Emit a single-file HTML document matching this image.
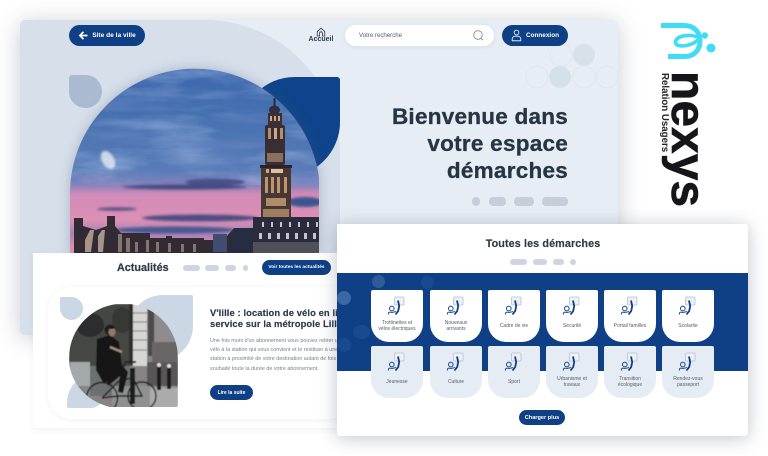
<!DOCTYPE html>
<html lang="fr"><head><meta charset="utf-8"><title>nexys</title>
<style>
*{box-sizing:border-box;margin:0;padding:0}
html,body{width:768px;height:456px;overflow:hidden;background:#fff}
body{font-family:"Liberation Sans",sans-serif;position:relative}
#r{position:absolute;left:0;top:0;width:768px;height:456px;filter:blur(.35px);overflow:hidden}
.a{position:absolute}
.t{position:absolute;white-space:nowrap}
.btn{position:absolute;background:#0f3f85;border-radius:12px;color:#fff;display:flex;align-items:center;justify-content:center;font-weight:bold;white-space:nowrap}
.p{position:absolute;background:#ccd5e1;border-radius:4px}
.tile{position:absolute;width:52px;height:52px;border-radius:2px 2px 18px 18px;background:#fff}
.tile.g{background:#e6ecf4}
.tile svg{position:absolute;left:16px;top:6px}
.tile span{position:absolute;left:0;right:0;top:29px;height:14px;display:flex;align-items:center;justify-content:center;text-align:center;font-size:5px;line-height:6px;color:#555c68}
</style></head><body><div id="r">

<!-- window -->
<div class="a" style="left:20px;top:20px;width:598px;height:315px;background:#e7edf5;border-radius:5px;box-shadow:0 3px 24px rgba(60,70,90,.28);overflow:hidden">
  <div class="a" style="left:0;top:0;width:320px;height:315px;background:#d6dfea;border-radius:0 135px 0 0"></div>
  <svg class="a" style="left:500px;top:20px" width="98" height="50">
    <g fill="none" stroke="#dfe6ee" stroke-width="1"><circle cx="41" cy="15" r="11"/><circle cx="17" cy="37" r="11"/><circle cx="64" cy="37" r="11"/><circle cx="87" cy="37" r="11"/></g>
    <circle cx="64" cy="15" r="11" fill="#d8e1e9"/><circle cx="40" cy="37" r="11" fill="#d6e0ea"/>
  </svg>
</div>

<!-- dark shape -->
<div class="a" style="left:240px;top:77px;width:100px;height:100px;background:#0f448c;border-radius:55px 3px 55px 0"></div>
<!-- small blob -->
<div class="a" style="left:69px;top:75px;width:33px;height:33px;background:#a9bad1;border-radius:3px 17px 17px 17px"></div>

<!-- photo -->
<svg class="a" style="left:60px;top:60px;filter:drop-shadow(0 0 6px rgba(70,85,110,.3))" width="270" height="200" viewBox="60 60 270 200">
<defs>
<clipPath id="c"><path d="M70 192A125 125 0 0 1 319 178V254H70Z"/></clipPath>
<linearGradient id="sky" x1="0" y1="0" x2="0" y2="1"><stop offset="0" stop-color="#3a66ac"/><stop offset=".35" stop-color="#4a74b2"/><stop offset=".55" stop-color="#587cb8"/><stop offset=".62" stop-color="#7f80ba"/><stop offset=".67" stop-color="#d08bb8"/><stop offset=".8" stop-color="#dc90b4"/><stop offset=".87" stop-color="#a682b8"/><stop offset=".93" stop-color="#dd8fa8"/><stop offset="1" stop-color="#dd8fa8"/></linearGradient>
<filter id="b1" x="-30%" y="-100%" width="160%" height="300%"><feGaussianBlur stdDeviation="1.300"/></filter>
<filter id="n1" x="0" y="0" width="1" height="1"><feTurbulence type="fractalNoise" baseFrequency=".014 .06" numOctaves="4" seed="4"/><feColorMatrix values="0 0 0 0 .55 0 0 0 0 .68 0 0 0 0 .92 2.200 0 0 0 -1"/></filter>
<filter id="n2" x="0" y="0" width="1" height="1"><feTurbulence type="fractalNoise" baseFrequency=".012 .08" numOctaves="3" seed="11"/><feColorMatrix values="0 0 0 0 .18 0 0 0 0 .28 0 0 0 0 .58 2.400 0 0 0 -1.050"/></filter>
</defs>
<g clip-path="url(#c)">
<rect x="60" y="60" width="270" height="200" fill="url(#sky)"/>
<rect x="60" y="60" width="270" height="125" filter="url(#n1)" opacity=".4"/>
<rect x="60" y="60" width="270" height="125" filter="url(#n2)" opacity=".4"/>
<g filter="url(#b1)">
<ellipse cx="108" cy="160" rx="6" ry="10" fill="#e9ecf4" opacity=".8" transform="rotate(-30 108 160)"/>
<ellipse cx="185" cy="187" rx="62" ry="2.500" fill="#47497f"/>
<ellipse cx="215" cy="182" rx="30" ry="3.500" fill="#465189"/>
<ellipse cx="117" cy="209" rx="20" ry="1.800" fill="#5c4f86"/>
<ellipse cx="200" cy="218" rx="58" ry="3.500" fill="#4d4e84"/>
<ellipse cx="305" cy="202" rx="18" ry="5" fill="#3d558f"/>
<ellipse cx="175" cy="230" rx="60" ry="3.500" fill="#4b5690"/>
</g>
<!-- houses -->
<path d="M74 254V218H83V226L96 230 107 226V216H115V226L121 233H150V238H166V236H172V238H204V240H213V234H227V236L234 228H253V254Z" fill="#322b33"/>
<path d="M85 240l5-10h4l-3 22h-6zM98 236l4-6h3l-2 22h-5z" fill="#a89488"/>
<path d="M118 252V234h4v18zM126 252v-14h4v14zM135 252v-10h3v10zM146 252v-12h3v12zM156 252v-10h3v10zM168 252v-9h3v9zM181 252v-8h3v8zM193 252v-8h3v8z" fill="#84766e"/>
<path d="M213 252V234H227V252Z" fill="#3f4d72"/>
<path d="M228 252 234 228H253V252Z" fill="#262d42"/>
<!-- tower -->
<rect x="273.500" y="98" width="2" height="10" fill="#2a2a38"/>
<ellipse cx="274.500" cy="110" rx="5.500" ry="4.500" fill="#2e2e3e"/>
<rect x="268" y="113" width="14" height="13" fill="#3d3034"/>
<rect x="265" y="125" width="20" height="40" rx="2" fill="#382e34"/>
<rect x="261" y="165" width="30" height="54" fill="#473833"/>
<rect x="260" y="165" width="32" height="3" fill="#2a2328"/>
<g fill="#d2a77c"><rect x="270" y="116" width="2" height="5"/><rect x="274" y="116" width="2" height="5"/><rect x="278" y="116" width="2" height="5"/><rect x="268" y="128" width="3" height="11" opacity=".8"/><rect x="274" y="128" width="3" height="11"/><rect x="280" y="128" width="3" height="11" opacity=".8"/><rect x="267" y="153" width="16" height="9" opacity=".55"/><rect x="266" y="169" width="3" height="4"/><rect x="271" y="169" width="12" height="4" fill="#e0c09a"/><rect x="265" y="177" width="3" height="16" opacity=".85"/><rect x="271" y="177" width="3" height="16" opacity=".85"/><rect x="277" y="177" width="3" height="16" opacity=".85"/><rect x="284" y="177" width="3" height="16" opacity=".85"/><rect x="266" y="198" width="20" height="8" fill="#b08c68"/><rect x="263" y="209" width="26" height="8" fill="#a07f60"/></g>
<!-- palace -->
<path d="M253 254V217H320V254Z" fill="#2a2b3c"/>
<path d="M253 242H320V254H253Z" fill="#50505a"/>
<g fill="#c4c5cc"><rect x="259" y="233" width="3" height="6"/><rect x="268" y="233" width="3" height="6"/><rect x="277" y="233" width="3" height="6"/><rect x="286" y="233" width="3" height="6"/><rect x="295" y="233" width="3" height="6"/><rect x="304" y="233" width="3" height="6"/><rect x="313" y="233" width="3" height="6"/><rect x="262" y="222" width="2" height="5"/><rect x="271" y="222" width="2" height="5"/><rect x="280" y="222" width="2" height="5"/><rect x="289" y="222" width="2" height="5"/><rect x="298" y="222" width="2" height="5"/><rect x="307" y="222" width="2" height="5"/><rect x="316" y="222" width="2" height="5"/></g>
</g></svg>

<!-- top bar -->
<div class="btn" style="left:69px;top:25px;width:76px;height:21px;font-size:6.600px;padding-left:14px">Site de la ville</div>
<svg class="a" style="left:78px;top:30px" width="11" height="11" viewBox="0 0 11 11"><path d="M9.500 5.500H2M5.500 1.800 1.800 5.500 5.500 9.200" fill="none" stroke="#fff" stroke-width="1.700"/></svg>
<svg class="a" style="left:316px;top:27px" width="10" height="10" viewBox="0 0 10 10"><path d="M1.200 9V4.600L5 1.200 8.800 4.600V9H6.400V6.200A1.400 1.400 0 0 0 3.600 6.200V9Z" fill="none" stroke="#2c3a4c" stroke-width=".8"/></svg>
<div class="t" style="left:301px;width:40px;top:36px;text-align:center;font-size:7px;line-height:8px;color:#29394a;font-weight:bold">Accueil</div>
<div class="a" style="left:345px;top:25px;width:149px;height:21px;background:#fff;border-radius:11px;box-shadow:0 1px 5px rgba(90,105,130,.12)"></div>
<div class="t" style="left:359px;top:32px;font-size:6.100px;line-height:8px;color:#556070">Votre recherche</div>
<svg class="a" style="left:472px;top:29px" width="13" height="13" viewBox="0 0 13 13"><circle cx="6" cy="6" r="4.300" fill="none" stroke="#7d8793" stroke-width=".8"/><path d="M9 9.200 11 11.200" stroke="#7d8793" stroke-width="1"/></svg>
<div class="btn" style="left:502px;top:25px;width:66px;height:21px;font-size:6.400px;padding-left:15px">Connexion</div>
<svg class="a" style="left:511px;top:29px" width="11" height="13" viewBox="0 0 11 13"><circle cx="5.500" cy="3.500" r="2.400" fill="none" stroke="#fff" stroke-width=".8"/><path d="M1.200 11.800V10A3 3 0 0 1 4.200 7.200H6.800A3 3 0 0 1 9.800 10V11.800Z" fill="none" stroke="#fff" stroke-width=".8"/></svg>

<!-- title -->
<div class="t" style="right:200px;top:103px;text-align:right;font-size:22.500px;line-height:27px;font-weight:bold;color:#263543;letter-spacing:.25px;-webkit-text-stroke:.3px #263543">Bienvenue dans<br>votre espace<br>démarches</div>
<div class="p" style="left:472px;top:197px;width:8px;height:9px;background:#c5ced9"></div>
<div class="p" style="left:489px;top:197px;width:17px;height:9px;background:#c5ced9"></div>
<div class="p" style="left:514px;top:197px;width:20px;height:9px;background:#c5ced9"></div>
<div class="p" style="left:542px;top:197px;width:26px;height:9px;background:#c5ced9"></div>

<!-- logo -->
<svg class="a" style="left:655px;top:18px" width="66" height="48" viewBox="655 18 66 48">
<path d="M661 25.500H684C694 25.500 700 32 700 41 700 51 693 56.500 685 56.500H668" fill="none" stroke="#3fdcf5" stroke-width="5"/>
<path d="M699 38C692 33.500 676 35 675.500 42 675 48 690 47 698 40" fill="none" stroke="#3fdcf5" stroke-width="3.600"/>
<circle cx="704.800" cy="35.500" r="3.200" fill="#3fdcf5"/><circle cx="711" cy="48" r="4.500" fill="#3fdcf5"/>
</svg>
<div class="t" style="left:711px;top:71px;transform-origin:0 0;transform:rotate(90deg);font-size:48px;line-height:48px;font-weight:bold;color:#15151a;-webkit-text-stroke:.6px #15151a">nexys</div>
<div class="t" style="left:668.500px;top:73px;transform-origin:0 0;transform:rotate(90deg);font-size:9.700px;line-height:10px;font-weight:bold;color:#26262c">Relation Usagers</div>

<!-- news card -->
<div class="a" style="left:33px;top:253px;width:320px;height:175px;background:#fff;box-shadow:0 2px 6px rgba(90,100,120,.08)"></div>
<div class="t" style="left:117px;top:261px;font-size:10.800px;line-height:14px;font-weight:bold;color:#2c3a48;-webkit-text-stroke:.2px #2c3a48">Actualités</div>
<div class="p" style="left:183px;top:265px;width:17px;height:6px"></div>
<div class="p" style="left:205px;top:265px;width:14px;height:6px"></div>
<div class="p" style="left:225px;top:265px;width:11px;height:6px"></div>
<div class="p" style="left:243px;top:265px;width:5px;height:6px"></div>
<div class="btn" style="left:262px;top:260px;width:69px;height:15px;font-size:4.800px">Voir toutes les actualités</div>

<div class="a" style="left:48px;top:287px;width:305px;height:132px;background:#fff;border-radius:24px;box-shadow:0 1px 7px rgba(100,115,140,.09)"></div>
<div class="a" style="left:60px;top:297px;width:23px;height:23px;background:#cbd7e4;border-radius:2px 12px 12px 12px"></div>
<div class="a" style="left:128px;top:295px;width:65px;height:66px;background:#cbd7e4;border-radius:35px 2px 35px 0"></div>
<div class="a" style="left:67px;top:373px;width:36px;height:35px;background:#cbd7e4;border-radius:30px 0 12px 2px"></div>
<svg class="a" style="left:69px;top:304px" width="109" height="104" viewBox="69 304 109 104">
<defs><clipPath id="d"><path d="M69 358A54.500 54.500 0 0 1 178 358V405Q178 407 176 407H110A54.500 50 0 0 1 69 358Z"/></clipPath>
<filter id="b3"><feGaussianBlur stdDeviation=".6"/></filter></defs>
<g clip-path="url(#d)"><g filter="url(#b3)">
<rect x="69" y="304" width="109" height="104" fill="#868484"/>
<rect x="69" y="304" width="64" height="62" fill="#454745"/>
<ellipse cx="90" cy="325" rx="14" ry="12" fill="#2c2e2d"/><ellipse cx="122" cy="320" rx="10" ry="13" fill="#353736"/>
<rect x="70" y="362" width="20" height="24" fill="#a4a9a9"/>
<rect x="90" y="366" width="40" height="30" fill="#6d6f6f"/>
<rect x="133" y="304" width="14" height="62" fill="#d6d6d4"/>
<path d="M133 313h14M133 322h14M133 331h14M133 340h14M133 350h14" stroke="#929292" stroke-width="1.300"/>
<rect x="129" y="304" width="4" height="60" fill="#2e2e2e"/>
<rect x="148" y="310" width="6" height="46" fill="#4b4b4b"/>
<rect x="155" y="312" width="23" height="50" fill="#8e8c8c"/>
<rect x="152" y="342" width="26" height="36" fill="#6a6667"/>
<rect x="147" y="362" width="31" height="26" fill="#5a5758"/>
<rect x="112" y="386" width="66" height="22" fill="#8f9090"/>
<rect x="150" y="388" width="28" height="20" fill="#ababab"/>
<rect x="157" y="365" width="4" height="25" fill="#1c1c1c"/><rect x="167" y="366" width="4" height="23" fill="#1c1c1c"/>
<circle cx="159" cy="365" r="2" fill="#ddd"/><circle cx="169" cy="366" r="2" fill="#ddd"/>
<path d="M97 339 110 335 119 342 122 366 104 384 96 370Z" fill="#171717"/>
<circle cx="110" cy="330" r="5.500" fill="#2a2523"/><ellipse cx="112" cy="332" rx="3.500" ry="4.500" fill="#93796c"/>
<path d="M105 330a6 5 0 0 1 10-3l-2 2-5 0-1 3z" fill="#1c1a19"/>
<path d="M104 372 122 365 128 372 123 393 118 392 120 376 108 386Z" fill="#141414"/>
<path d="M110 347 122 352" stroke="#a28a7c" stroke-width="2.500"/>
<path d="M136 362h-10l-3 6" stroke="#2a2a2a" stroke-width="2" fill="none"/>
<g fill="none" stroke="#1d1d1d" stroke-width="1.400"><circle cx="102" cy="398" r="15.500"/><circle cx="142" cy="396" r="14"/><path d="M102 398 120 380 133 378 142 396 118 396 102 398"/></g>
<rect x="130" y="368" width="5" height="36" fill="#1d1d1d"/>
</g></g></svg>
<div class="a" style="left:210px;top:307px;width:127px;height:24px;overflow:hidden">
<div style="font-size:9.400px;line-height:11px;font-weight:bold;color:#2c3946;white-space:nowrap;letter-spacing:.1px;-webkit-text-stroke:.15px #2c3946">V'lille : location de vélo en libre<br>service sur la métropole Lille</div></div>
<div class="a" style="left:210px;top:337px;width:127px;height:36px;overflow:hidden">
<div style="font-size:5.400px;line-height:9.200px;color:#7a818a;white-space:nowrap">Une fois muni d'un abonnement vous pouvez retirer un<br>vélo à la station qui vous convient et le restituer à une<br>station à proximité de votre destination autant de fois<br>souhaité toute la durée de votre abonnement.</div></div>
<div class="btn" style="left:210px;top:385px;width:43px;height:15px;font-size:5px">Lire la suite</div>

<!-- demarches card -->
<div class="a" style="left:337px;top:224px;width:411px;height:212px;background:#fff;border-radius:0 3px 4px 3px;box-shadow:0 2px 18px rgba(50,60,80,.3);overflow:hidden">
  <div class="a" style="left:0;top:49px;width:411px;height:98px;background:#0f3f85;overflow:hidden">
    <div class="a" style="left:0;top:18px;width:14px;height:14px;border-radius:50%;background:#3a68a5"></div>
    <div class="a" style="left:35px;top:2px;width:13px;height:13px;border-radius:50%;background:#2f5c98"></div>
    <div class="a" style="left:16px;top:52px;width:17px;height:14px;border-radius:50%;background:#174a8e"></div>
    <div class="a" style="left:0;top:65px;width:14px;height:14px;border-radius:50%;background:#174a8e"></div>
    <div class="a" style="left:84px;top:3px;width:13px;height:13px;border-radius:50%;background:#174a8e"></div>
  </div>
</div>
<div class="t" style="left:443px;width:200px;top:237px;text-align:center;font-size:10.800px;line-height:14px;font-weight:bold;color:#2f3a47;letter-spacing:.1px;-webkit-text-stroke:.15px #2f3a47">Toutes les démarches</div>
<div class="p" style="left:510px;top:259px;width:17px;height:6px"></div>
<div class="p" style="left:533px;top:259px;width:14px;height:6px"></div>
<div class="p" style="left:553px;top:259px;width:11px;height:6px"></div>
<div class="p" style="left:570px;top:259px;width:6px;height:6px"></div>

<svg width="0" height="0" style="position:absolute"><defs><symbol id="i" viewBox="0 0 18 20">
<rect x="7.500" y="1" width="9.500" height="8" rx="1" fill="#edf1f6" stroke="#b3c1d5" stroke-width=".8"/>
<path d="M11 4.500 12.200 10 11.200 15 8.500 18.500" fill="none" stroke="#133f85" stroke-width="1.800"/>
<circle cx="4.800" cy="12.500" r="2.300" fill="none" stroke="#2b5797" stroke-width="1.100"/>
<path d="M1.500 18.500C1 16 3 15.800 5 16.500L9 15.500" fill="none" stroke="#2b5797" stroke-width="1.100"/>
</symbol></defs></svg>

<div class="tile" style="left:371px;top:290px"><svg width="18" height="20"><use href="#i"/></svg><span>Trottinettes et<br>vélos électriques</span></div>
<div class="tile" style="left:430px;top:290px"><svg width="18" height="20"><use href="#i"/></svg><span>Nouveaux<br>arrivants</span></div>
<div class="tile" style="left:488px;top:290px"><svg width="18" height="20"><use href="#i"/></svg><span>Cadre de vie</span></div>
<div class="tile" style="left:546px;top:290px"><svg width="18" height="20"><use href="#i"/></svg><span>Sécurité</span></div>
<div class="tile" style="left:604px;top:290px"><svg width="18" height="20"><use href="#i"/></svg><span>Portail familles</span></div>
<div class="tile" style="left:662px;top:290px"><svg width="18" height="20"><use href="#i"/></svg><span>Scolarite</span></div>
<div class="tile g" style="left:371px;top:346px"><svg width="18" height="20"><use href="#i"/></svg><span>Jeunesse</span></div>
<div class="tile g" style="left:430px;top:346px"><svg width="18" height="20"><use href="#i"/></svg><span>Culture</span></div>
<div class="tile g" style="left:488px;top:346px"><svg width="18" height="20"><use href="#i"/></svg><span>Sport</span></div>
<div class="tile g" style="left:546px;top:346px"><svg width="18" height="20"><use href="#i"/></svg><span>Urbanisme et<br>travaux</span></div>
<div class="tile g" style="left:604px;top:346px"><svg width="18" height="20"><use href="#i"/></svg><span>Transition<br>écologique</span></div>
<div class="tile g" style="left:662px;top:346px"><svg width="18" height="20"><use href="#i"/></svg><span>Rendez-vous<br>passeport</span></div>
<div class="btn" style="left:519px;top:410px;width:46px;height:15px;font-size:5.600px">Charger plus</div>
</div></body></html>
